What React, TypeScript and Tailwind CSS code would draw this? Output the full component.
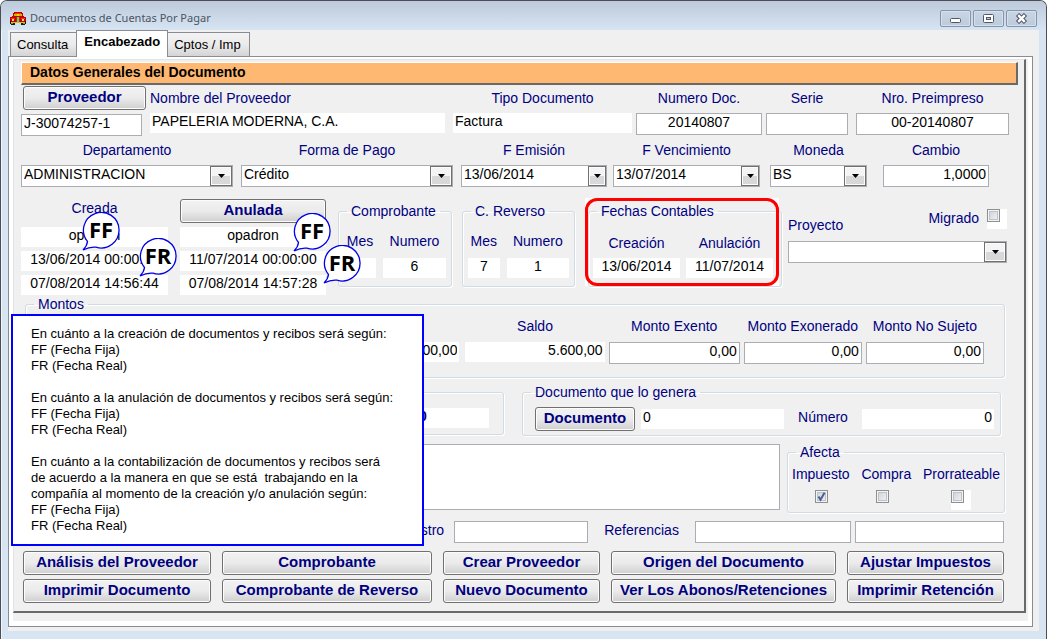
import React, { useId } from "react";

const inputBase =
  "block w-full min-w-0 rounded-none px-0.5 pb-1 text-sm leading-4 text-black outline-none";
const boxed = "h-[22px] border border-[#abadb3] bg-white";
const plain = "h-5 bg-white";

type Align = "left" | "center" | "right";
const alignClass: Record<Align, string> = {
  left: "text-left",
  center: "text-center",
  right: "text-right",
};

function TextBox({
  id,
  value = "",
  align = "left",
  flat = false,
  name,
}: {
  id?: string;
  value?: string;
  align?: Align;
  flat?: boolean;
  name?: string;
}) {
  return (
    <input
      id={id}
      aria-label={name}
      type="text"
      defaultValue={value}
      readOnly={flat}
      className={`${inputBase} ${flat ? plain : boxed} ${alignClass[align]}`}
    />
  );
}

function Combo({ id, value = "", wide = true }: { id: string; value?: string; wide?: boolean }) {
  return (
    <div className="flex h-[22px] border border-[#abadb3] bg-white">
      <select
        id={id}
        defaultValue={value}
        className="min-w-0 flex-1 appearance-none px-0.5 pb-1 text-sm leading-4 text-black outline-none"
      >
        <option>{value}</option>
      </select>
      <span
        className={`pointer-events-none flex shrink-0 items-center justify-center border border-[#707070] bg-linear-to-b from-[#f4f4f4] from-50% to-[#d8d8d8] to-50% shadow-[inset_0_0_0_1px_#fcfcfc] ${
          wide ? "w-[22px]" : "w-[18px]"
        }`}
      >
        <svg width="7" height="4" viewBox="0 0 7 4" aria-hidden="true">
          <path d="M0 0h7L3.500 4z" fill="#000" />
        </svg>
      </span>
    </div>
  );
}

function Field({
  label,
  value,
  align = "left",
  flat,
  combo,
  narrow,
  gap = "gap-[7px]",
  className = "",
}: {
  label: string;
  value?: string;
  align?: Align;
  flat?: boolean;
  combo?: boolean;
  narrow?: boolean;
  gap?: string;
  className?: string;
}) {
  const id = useId();
  return (
    <div className={`flex min-w-0 flex-col ${gap} ${className}`}>
      <label htmlFor={id} className="block h-4 text-center text-sm leading-4 whitespace-nowrap text-[#000080]">
        {label}
      </label>
      {combo ? (
        <Combo id={id} value={value} wide={!narrow} />
      ) : (
        <TextBox id={id} value={value} align={align} flat={flat} />
      )}
    </div>
  );
}

function PushButton({ children }: { children: React.ReactNode }) {
  return (
    <button
      type="button"
      className="h-6 w-full rounded-[3px] border border-[#707070] bg-linear-to-b from-[#f2f2f2] via-[#ebebeb] via-50% to-[#cfcfcf] pb-0.5 text-[15px] leading-4 font-bold whitespace-nowrap text-[#000080] shadow-[inset_0_0_0_1px_#fcfcfc]"
    >
      {children}
    </button>
  );
}

function Group({ title, children, className = "" }: { title?: string; children: React.ReactNode; className?: string }) {
  return (
    <fieldset
      className={`min-w-0 rounded-[3px] border border-[#d0dbe3] shadow-[1px_1px_0_#fff,inset_1px_1px_0_#fff] ${className}`}
    >
      {title && <legend className="ml-2 h-4 px-1 text-sm leading-4 text-[#000080]">{title}</legend>}
      {children}
    </fieldset>
  );
}

function CheckBox({ id, checked = false, backed = false }: { id: string; checked?: boolean; backed?: boolean }) {
  return (
    <span className={`relative block h-5 w-5 ${backed ? "bg-white" : ""}`}>
      <input
        id={id}
        type="checkbox"
        defaultChecked={checked}
        className="peer block h-[13px] w-[13px] appearance-none border border-[#8e8f8f] bg-linear-to-br from-[#c9ced6] to-[#f6f6f6] shadow-[inset_0_0_0_1px_#f4f4f4,inset_0_0_0_2px_#bcc2ca]"
      />
      <svg
        className="pointer-events-none absolute top-0 left-0 hidden peer-checked:block"
        width="13"
        height="13"
        viewBox="0 0 13 13"
        aria-hidden="true"
      >
        <path d="M3.500 6.500 5.500 9.800 9.500 2.800" fill="none" stroke="#4a5f97" strokeWidth="2" />
      </svg>
    </span>
  );
}

function CheckField({ label, checked, backed }: { label: string; checked?: boolean; backed?: boolean }) {
  const id = useId();
  return (
    <div className="flex flex-col items-center gap-2">
      <label htmlFor={id} className="h-4 text-sm leading-4 whitespace-nowrap text-[#000080]">
        {label}
      </label>
      <div className={checked ? "pl-2" : ""}>
        <CheckBox id={id} checked={checked} backed={backed} />
      </div>
    </div>
  );
}

function Callout({ text, className }: { text: string; className: string }) {
  return (
    <div className={`absolute h-[39px] w-[38px] ${className}`}>
      <svg className="absolute inset-0" width="38" height="39" viewBox="0 0 38 39" aria-hidden="true">
        <path
          d="M5.500 29.500A17.800 17.800 0 1 1 14 35.200Q8 34.500 1 38Q5 34 5.500 29.500Z"
          fill="#fff"
          stroke="#0000e6"
          strokeWidth="1.300"
        />
      </svg>
      <span className="relative block pt-[5px] text-center font-['Open_Sans',sans-serif] text-[22px] leading-6 font-bold text-black">
        {text}
      </span>
    </div>
  );
}

function CarIcon() {
  return (
    <svg width="16" height="13" viewBox="0 0 16 13" shapeRendering="crispEdges" aria-hidden="true">
      <path d="M4 0h8v1h1v3h1v1h2v5H0V5h2V4h1V1h1z" fill="#c40000" />
      <path d="M5 1h6v1H5z" fill="#ff3020" />
      <path d="M4 2h3v2H4zM9 2h3v2H9z" fill="#d8b000" />
      <path d="M7 2h2v2H7z" fill="#f0d800" />
      <path d="M1 6h4v1H1zM11 6h4v1h-4z" fill="#ff3020" />
      <path d="M6 5h4v5H6z" fill="#5a5030" />
      <path d="M7 5h2v5H7z" fill="#c8a830" />
      <path d="M2 7h2v2H2zM12 7h2v2h-2z" fill="#ffe860" />
      <path d="M0 9h1v1H0zM15 9h1v1h-1z" fill="#181818" />
      <path d="M0 10h5v3H1v-1H0zM11 10h5v2h-1v1h-4z" fill="#181818" />
      <path d="M1 10h14v1H1z" fill="#d8c020" />
      <path d="M1 11h2v1H1zM13 11h2v1h-2z" fill="#98981c" />
    </svg>
  );
}

function WindowButton({ name, children }: { name: string; children: React.ReactNode }) {
  return (
    <button
      type="button"
      aria-label={name}
      className="flex h-[17px] w-[31px] items-center justify-center rounded-[2px] border border-[#8593aa] bg-linear-to-b from-[#c8d5e4] to-[#bccbdc] shadow-[inset_0_0_0_1px_#d6e1ed]"
    >
      <svg width="13" height="11" viewBox="0 0 13 11" aria-hidden="true">
        {children}
      </svg>
    </button>
  );
}

function Tab({ children, active = false }: { children: string; active?: boolean }) {
  return (
    <button
      type="button"
      role="tab"
      aria-selected={active}
      className={
        active
          ? "relative z-10 -mr-px -mb-px -ml-px h-[27px] border border-b-0 border-[#898c95] bg-white px-[7px] pb-1 text-[13px] font-bold"
          : "h-6 border border-b-0 border-[#898c95] bg-linear-to-b from-[#f3f3f3] via-[#ebebeb] via-50% to-[#d4d4d4] pr-2 pl-[6px] text-[13px]"
      }
    >
      {children}
    </button>
  );
}

function Stamp({ owner, values }: { owner: string; values: string[] }) {
  return (
    <div className="flex flex-col gap-1">
      {values.map((v, i) => (
        <TextBox key={i} flat align="center" value={v} name={`${owner} ${i + 1}`} />
      ))}
    </div>
  );
}

const actions = [
  "Análisis del Proveedor",
  "Comprobante",
  "Crear Proveedor",
  "Origen del Documento",
  "Ajustar Impuestos",
  "Imprimir Documento",
  "Comprobante de Reverso",
  "Nuevo Documento",
  "Ver Los Abonos/Retenciones",
  "Imprimir Retención",
];

export default function App() {
  return (
    <div className="min-h-screen bg-white font-['Liberation_Sans',Arial,sans-serif] text-black">
      <div className="relative flex min-h-screen flex-col rounded-t-[7px] border border-b-0 border-[#4b4e54] bg-[#d7e4f2] px-[7px] pb-2 shadow-[inset_1px_1px_0_#eef4fa]">
        <header className="-mx-[7px] flex h-[29px] items-start justify-between rounded-t-[6px] bg-linear-to-b from-[#bccadb] to-[#d7e4f2] pr-[9px] pl-[9px]">
          <h1 className="flex items-center gap-1 pt-[9px] font-['Noto_Sans',sans-serif] text-[11px] leading-4 text-[#4a5564]">
            <CarIcon />
            Documentos de Cuentas Por Pagar
          </h1>
          <div className="flex gap-0.5 pt-[9px]">
            <WindowButton name="Minimizar">
              <rect x="1.500" y="5.500" width="10" height="4" rx="1" fill="#fff" stroke="#535666" />
            </WindowButton>
            <WindowButton name="Maximizar">
              <rect x="1.500" y="1.500" width="10" height="8" rx="1" fill="#fff" stroke="#535666" />
              <rect x="4.500" y="4.500" width="4" height="2" fill="#bccbdc" stroke="#535666" />
            </WindowButton>
            <WindowButton name="Cerrar">
              <path d="M2.500 1.500 10.500 9.500M10.500 1.500 2.500 9.500" stroke="#535666" strokeWidth="4.500" />
              <path d="M3.200 2.200 9.800 8.800M9.800 2.200 3.200 8.800" stroke="#fff" strokeWidth="2.400" />
            </WindowButton>
          </div>
        </header>

        <main className="relative flex flex-1 flex-col bg-[#f0f0f0] pr-[6px] pb-1">
          <div role="tablist" className="flex items-end pl-0.5">
            <Tab>Consulta</Tab>
            <Tab active>Encabezado</Tab>
            <Tab>Cptos / Imp</Tab>
          </div>

          <div className="flex-1 border border-[#898c95] bg-white pt-0.5 pr-1 pb-0.5 pl-1">
            <div className="h-full bg-[#f0f0f0] pb-2 pr-0.5">
              <form className="border-t border-r-2 border-b-2 border-l border-t-[#e3e3e3] border-r-[#696969] border-b-[#696969] border-l-[#e3e3e3] pt-0.5 pr-[6px] pb-2 pl-[7px]">
                <h2 className="h-[23px] border-t border-r-2 border-b-2 border-l border-t-white border-r-[#696969] border-b-[#696969] border-l-white bg-[#ffb871] pl-2 text-sm leading-[18px] font-bold">
                  Datos Generales del Documento
                </h2>

                <div className="flex flex-col pr-[9px]">
                  {/* Proveedor y numeración */}
                  <div className="grid grid-cols-[129fr_303fr_183fr_130fr_90fr_153fr]">
                    <div className="flex min-w-0 flex-col gap-1 pr-2">
                      <div className="-mr-1 pl-0.5">
                        <PushButton>Proveedor</PushButton>
                      </div>
                      <TextBox value="J-30074257-1" name="Proveedor" />
                    </div>
                    <div className="flex min-w-0 flex-col gap-[7px] pt-[5px] pr-2">
                      <label htmlFor="nombre" className="h-4 text-sm leading-4 text-[#000080]">
                        Nombre del Proveedor
                      </label>
                      <TextBox id="nombre" flat value="PAPELERIA MODERNA, C.A." />
                    </div>
                    <Field className="pt-[5px] pr-1" label="Tipo Documento" flat value="Factura" />
                    <Field className="pt-[5px] pr-1" label="Numero Doc." align="center" value="20140807" />
                    <Field className="pt-[5px] pr-2" label="Serie" />
                    <Field className="pt-[5px]" label="Nro. Preimpreso" align="center" value="00-20140807" />
                  </div>

                  {/* Condiciones */}
                  <div className="grid grid-cols-[220fr_220fr_152fr_157fr_113fr_126fr] pt-1.5">
                    <Field className="pr-2" combo label="Departamento" value="ADMINISTRACION" />
                    <Field className="pr-2" combo label="Forma de Pago" value="Crédito" />
                    <Field className="pr-1.5" combo narrow label="F Emisión" value="13/06/2014" />
                    <Field className="pr-2.5" combo narrow label="F Vencimiento" value="13/07/2014" />
                    <Field className="pr-4" combo label="Moneda" value="BS" />
                    <Field className="pr-5" label="Cambio" align="right" value="1,0000" />
                  </div>

                  {/* Auditoría y contabilidad */}
                  <div className="grid grid-cols-[159fr_158fr_124fr_123fr_203fr_221fr] items-start pt-[11px]">
                    <div className="relative pr-3">
                      <p className="h-[29px] pt-0.5 text-center text-sm leading-4 text-[#000080]">Creada</p>
                      <Stamp owner="Creada" values={["opadron", "13/06/2014 00:00:00", "07/08/2014 14:56:44"]} />
                      <Callout text="FF" className="top-[14px] left-[61px]" />
                      <Callout text="FR" className="top-[40px] left-[118px]" />
                    </div>
                    <div className="relative pr-3">
                      <div className="h-[29px]">
                        <PushButton>Anulada</PushButton>
                      </div>
                      <Stamp owner="Anulada" values={["opadron", "11/07/2014 00:00:00", "07/08/2014 14:57:28"]} />
                      <Callout text="FF" className="top-[15px] left-[113px]" />
                      <Callout text="FR" className="top-[47px] left-[143px]" />
                    </div>
                    <div className="pt-[5px] pr-2.5">
                      <Group title="Comprobante">
                        <div className="grid grid-cols-[30fr_59fr] gap-[7px] px-[5px] pt-3.5 pb-2">
                          <Field label="Mes" flat align="center" gap="gap-[9px]" value="" />
                          <Field label="Numero" flat align="center" gap="gap-[9px]" value="6" />
                        </div>
                      </Group>
                    </div>
                    <div className="pt-[5px] pr-2.5">
                      <Group title="C. Reverso">
                        <div className="grid grid-cols-[30fr_59fr] gap-[7px] px-[5px] pt-3.5 pb-2">
                          <Field label="Mes" flat align="center" gap="gap-[9px]" value="7" />
                          <Field label="Numero" flat align="center" gap="gap-[9px]" value="1" />
                        </div>
                      </Group>
                    </div>
                    <div className="relative pt-[5px] pr-1.5 pl-[3px]">
                      <div className="absolute top-0 right-[9px] left-0 h-[88px] bg-white">
                        <div className="h-full rounded-[12px] bg-[#f0f0f0]" />
                      </div>
                      <div className="relative">
                        <Group title="Fechas Contables">
                          <div className="grid grid-cols-2 gap-1.5 pt-4 pr-2 pb-2 pl-1">
                            <Field label="Creación" flat align="center" value="13/06/2014" />
                            <Field label="Anulación" flat align="center" value="11/07/2014" />
                          </div>
                        </Group>
                      </div>
                      <div className="pointer-events-none absolute top-0 right-[9px] left-0 h-[88px] rounded-[12px] border-3 border-[#ff0000]" />
                    </div>
                    <div className="pt-[11px] pr-0.5">
                      <div className="flex items-start justify-between">
                        <label htmlFor="proyecto" className="pt-2 text-sm leading-4 text-[#000080]">
                          Proyecto
                        </label>
                        <div className="flex gap-2">
                          <label htmlFor="migrado" className="pt-px text-sm leading-4 text-[#000080]">
                            Migrado
                          </label>
                          <CheckBox id="migrado" backed />
                        </div>
                      </div>
                      <div className="pt-2">
                        <Combo id="proyecto" />
                      </div>
                    </div>
                  </div>

                  {/* Montos */}
                  <div className="pt-px pr-1 pl-1">
                    <Group title="Montos">
                      <div className="grid grid-cols-[215fr_222fr_143fr_135fr_122fr_136fr] px-0.5 pt-1.5 pb-[13px]">
                        <div />
                        <div className="pt-6 pr-1.5">
                          <TextBox flat align="right" value="5.600,00" name="Total" />
                        </div>
                        <Field className="pr-1" gap="gap-2" label="Saldo" flat align="right" value="5.600,00" />
                        <Field className="pr-1" gap="gap-2" label="Monto Exento" align="right" value="0,00" />
                        <Field className="pr-1" gap="gap-2" label="Monto Exonerado" align="right" value="0,00" />
                        <Field className="pr-[18px]" gap="gap-2" label="Monto No Sujeto" align="right" value="0,00" />
                      </div>
                    </Group>
                  </div>

                  {/* Origen */}
                  <div className="grid grid-cols-[483fr_479fr] gap-[18px] pt-1.5 pr-2">
                    <div className="pt-2">
                      <Group>
                        <div className="flex justify-end pt-[15px] pr-3.5 pb-[6px]">
                          <div className="h-5 w-20 bg-white pl-2.5 text-sm leading-4 font-bold text-[#000080]">0</div>
                        </div>
                      </Group>
                    </div>
                    <Group title="Documento que lo genera">
                      <div className="flex items-center pt-1.5 pr-1.5 pb-1 pl-3">
                        <div className="w-[100px]">
                          <PushButton>Documento</PushButton>
                        </div>
                        <div className="flex-[143] pl-1.5">
                          <TextBox flat value="0" name="Documento" />
                        </div>
                        <label htmlFor="numero" className="px-3.5 pb-1 text-sm leading-4 text-[#000080]">
                          Número
                        </label>
                        <div className="flex-[132]">
                          <TextBox id="numero" flat align="right" value="0" />
                        </div>
                      </div>
                    </Group>
                  </div>

                  {/* Observaciones e impuestos */}
                  <div className="grid grid-cols-[759fr_218fr] gap-[7px] pt-2 pr-1">
                    <textarea
                      aria-label="Observaciones"
                      className="block h-[66px] w-full resize-none border border-[#abadb3] bg-white p-1 text-sm outline-none"
                    />
                    <Group title="Afecta">
                      <div className="flex justify-between px-1 pt-1.5 pb-0.5">
                        <CheckField label="Impuesto" checked />
                        <CheckField label="Compra" />
                        <CheckField label="Prorrateable" backed />
                      </div>
                    </Group>
                  </div>

                  {/* Referencias */}
                  <div className="flex items-center gap-1 pt-2 pr-[5px]">
                    <label htmlFor="registro" className="flex-[423] pr-1.5 pb-1 text-right text-sm leading-4 text-[#000080]">
                      Registro
                    </label>
                    <div className="flex-[134]">
                      <TextBox id="registro" />
                    </div>
                    <label htmlFor="referencias" className="px-3 pb-1 text-sm leading-4 text-[#000080]">
                      Referencias
                    </label>
                    <div className="flex-[156]">
                      <TextBox id="referencias" />
                    </div>
                    <div className="flex-[149]">
                      <TextBox name="Referencias 2" />
                    </div>
                  </div>

                  {/* Acciones */}
                  <div className="grid grid-cols-[188fr_210fr_157fr_225fr_157fr] gap-x-[11px] gap-y-1 pt-2 pr-[5px] pl-0.5">
                    {actions.map((a) => (
                      <PushButton key={a}>{a}</PushButton>
                    ))}
                  </div>
                </div>
              </form>
            </div>
          </div>

          <aside className="absolute top-[284px] left-[3px] h-[232px] w-[413px] border-2 border-[#0000ff] bg-white px-[18px] pt-2.5 text-[13px] leading-4 whitespace-pre">
            <p>En cuánto a la creación de documentos y recibos será según:</p>
            <p>FF (Fecha Fija)</p>
            <p>FR (Fecha Real)</p>
            <p className="pt-4">En cuánto a la anulación de documentos y recibos será según:</p>
            <p>FF (Fecha Fija)</p>
            <p>FR (Fecha Real)</p>
            <p className="pt-4">En cuánto a la contabilización de documentos y recibos será</p>
            <p>de acuerdo a la manera en que se está  trabajando en la</p>
            <p>compañía al momento de la creación y/o anulación según:</p>
            <p>FF (Fecha Fija)</p>
            <p>FR (Fecha Real)</p>
          </aside>
        </main>
      </div>
    </div>
  );
}
